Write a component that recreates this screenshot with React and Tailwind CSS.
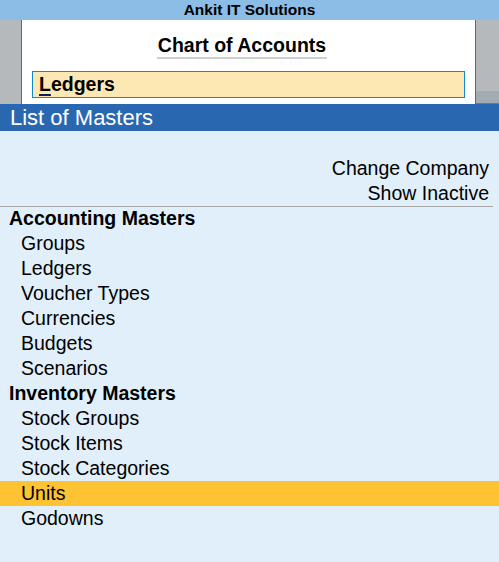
import React from 'react';

const sections = [
  { title: 'Accounting Masters', items: ['Groups', 'Ledgers', 'Voucher Types', 'Currencies', 'Budgets', 'Scenarios'] },
  { title: 'Inventory Masters', items: ['Stock Groups', 'Stock Items', 'Stock Categories', 'Units', 'Godowns'] },
];

export default function App() {
  const selected = 'Units';
  return (
    <div className="w-[499px] h-[562px] bg-[#e1effa] text-black overflow-hidden" style={{ fontFamily: '"Liberation Sans", Arial, sans-serif' }}>
      {/* Company bar */}
      <div className="h-[20px] bg-[#8bbde6] flex items-center justify-center text-[15.5px] font-bold leading-none">
        Ankit IT Solutions
      </div>

      {/* Gateway panel */}
      <div className="flex h-[84px]">
        <div className="w-[22px] bg-[#b5b9bc] border-r border-[#666]" />
        <div className="flex-1 bg-white flex flex-col">
          <div className="flex justify-center pr-[13px] pt-[13px]">
            <div className="text-[19.5px] font-bold leading-[24px] border-b-2 border-[#cfcfcf] px-px">Chart of Accounts</div>
          </div>
          <div className="mx-[10px] mt-[12px] h-[27px] border border-[#0b8bd0] bg-[#fde7b2] flex items-center pl-[6px] text-[19.5px] font-bold">
            <span className="underline decoration-2 decoration-[#101c58] underline-offset-[3px]">L</span>edgers
          </div>
        </div>
        <div className="w-[24px] border-l border-[#666] flex flex-col">
          <div className="flex-1 bg-[#b5b9bc]" />
          <div className="h-[13px] bg-[#a2aab2] border-b border-[#777]" />
        </div>
      </div>

      {/* Title bar */}
      <div className="h-[27px] bg-[#2a67b1] text-white text-[22px] leading-[27px] pl-[10px]">List of Masters</div>

      {/* List */}
      <div className="pt-[25px] text-[19.5px]">
        <div className="h-[25px] leading-[25px] text-right pr-[10px]">Change Company</div>
        <div className="h-[25px] leading-[25px] text-right pr-[10px]">Show Inactive</div>
        <div className="mr-[6px] -mb-px border-t border-[#a8a8a8]" />
        {sections.map((s) => (
          <div key={s.title}>
            <div className="h-[25px] leading-[25px] font-bold pl-[9px]">{s.title}</div>
            {s.items.map((it) => (
              <div
                key={it}
                className={`h-[25px] leading-[25px] pl-[21px] ${it === selected ? 'bg-[#fec332]' : ''}`}
              >
                {it}
              </div>
            ))}
          </div>
        ))}
      </div>
    </div>
  );
}
